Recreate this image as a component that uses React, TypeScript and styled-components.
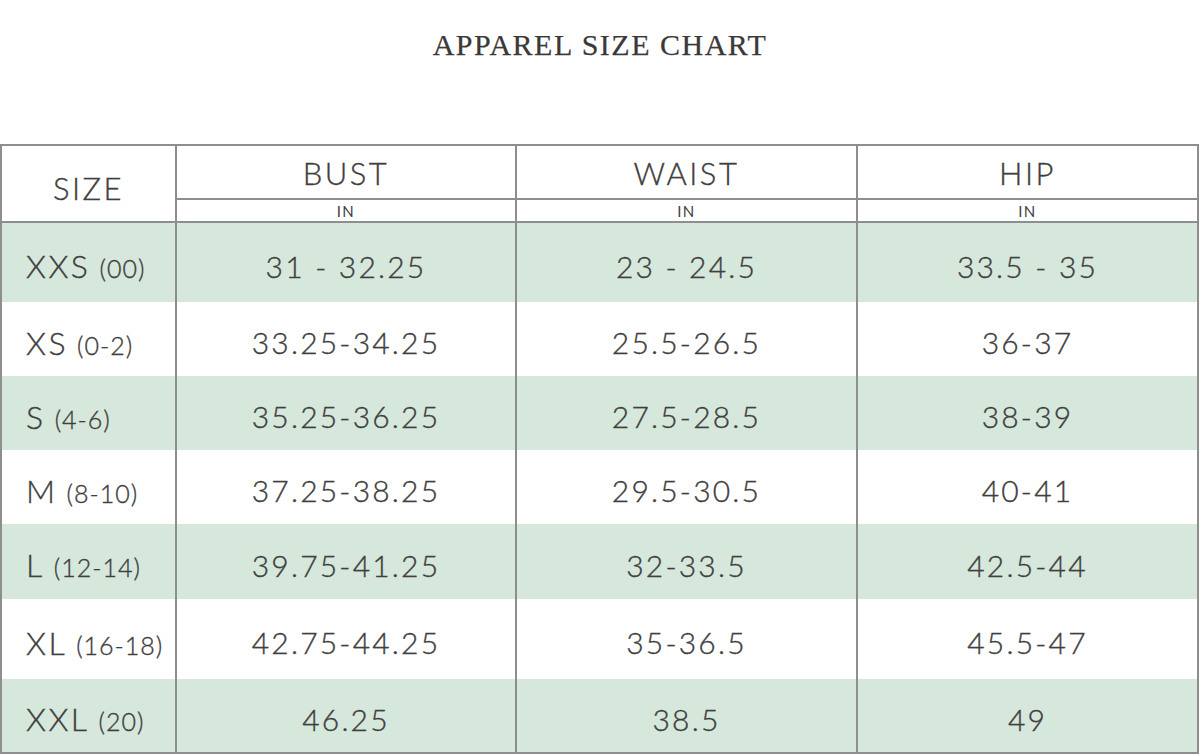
import React from "react";
import styled, { createGlobalStyle } from "styled-components";

const Global = createGlobalStyle`
  html, body { margin: 0; padding: 0; background: #ffffff; }
  body { font-family: "Lato", "Liberation Sans", sans-serif; color: #403e3e; }
`;

const Page = styled.div`
  width: 1200px;
  height: 756px;
  overflow: hidden;
  background: #ffffff;
`;

const TitleBar = styled.header`
  height: 144px;
  display: flex;
  justify-content: center;
  align-items: flex-start;
  box-sizing: border-box;
`;

const Title = styled.h1`
  margin: 27px 0 0;
  font-family: "Liberation Serif", "DejaVu Serif", serif;
  font-weight: 400;
  font-size: 30px;
  line-height: 36px;
  letter-spacing: 1.5px;
  color: #3b3838;
  -webkit-text-stroke: 0.25px #3b3838;
`;

const Table = styled.table`
  width: 1197px;
  table-layout: fixed;
  border-collapse: collapse;
  border: 2px solid #8e8e8e;
`;

const Col = styled.col<{ $w: number }>`
  width: ${(p) => p.$w}px;
`;

const HeadRow = styled.tr<{ $h: number }>`
  height: ${(p) => p.$h}px;
`;

const HeadCell = styled.th<{ $size?: boolean }>`
  border: 2px solid #8e8e8e;
  padding: ${(p) => (p.$size ? "8px 0 0" : "2px 0 0")};
  font-weight: 300;
  font-size: 31px;
  line-height: 36px;
  letter-spacing: 2.5px;
  text-align: center;
  vertical-align: middle;
  color: #403e3e;
  -webkit-text-stroke: 0.35px #403e3e;
`;

const UnitCell = styled.th`
  border: 2px solid #8e8e8e;
  padding: 1px 0 0;
  font-weight: 400;
  font-size: 15px;
  line-height: 18px;
  letter-spacing: 1.5px;
  text-align: center;
  vertical-align: middle;
  color: #403e3e;
`;

const Row = styled.tr<{ $shaded: boolean; $h: number }>`
  background: ${(p) => (p.$shaded ? "#d6e8dc" : "#ffffff")};
  height: ${(p) => p.$h}px;
`;

const SizeCell = styled.td`
  border-right: 2px solid #8e8e8e;
  padding: 6px 0 0 24px;
  vertical-align: middle;
  white-space: nowrap;
  font-weight: 300;
  -webkit-text-stroke: 0.35px #403e3e;
`;

const SizeLabel = styled.span`
  font-size: 32px;
  letter-spacing: 2.5px;
`;

const SizeNum = styled.span`
  font-size: 25px;
  letter-spacing: 1px;
  margin-left: 9px;
`;

const ValueCell = styled.td`
  border-right: 2px solid #8e8e8e;
  padding: 6px 0 0;
  text-align: center;
  vertical-align: middle;
  font-weight: 300;
  font-size: 30px;
  letter-spacing: 2.2px;
  white-space: pre;
  -webkit-text-stroke: 0.35px #403e3e;
`;

type SizeRow = {
  size: string;
  num: string;
  bust: string;
  waist: string;
  hip: string;
  h: number;
};

const rows: SizeRow[] = [
  { size: "XXS", num: "(00)", bust: "31 - 32.25", waist: "23 - 24.5", hip: "33.5 - 35", h: 80 },
  { size: "XS", num: "(0-2)", bust: "33.25-34.25", waist: "25.5-26.5", hip: "36-37", h: 74 },
  { size: "S", num: "(4-6)", bust: "35.25-36.25", waist: "27.5-28.5", hip: "38-39", h: 74 },
  { size: "M", num: "(8-10)", bust: "37.25-38.25", waist: "29.5-30.5", hip: "40-41", h: 74 },
  { size: "L", num: "(12-14)", bust: "39.75-41.25", waist: "32-33.5", hip: "42.5-44", h: 75 },
  { size: "XL", num: "(16-18)", bust: "42.75-44.25", waist: "35-36.5", hip: "45.5-47", h: 80 },
  { size: "XXL", num: "(20)", bust: "46.25", waist: "38.5", hip: "49", h: 74 },
];

export default function App() {
  return (
    <Page>
      <Global />
      <TitleBar>
        <Title>APPAREL SIZE CHART</Title>
      </TitleBar>
      <Table>
        <colgroup>
          <Col $w={175} />
          <Col $w={340} />
          <Col $w={341} />
          <Col $w={341} />
        </colgroup>
        <thead>
          <HeadRow $h={54}>
            <HeadCell $size rowSpan={2}>SIZE</HeadCell>
            <HeadCell>BUST</HeadCell>
            <HeadCell>WAIST</HeadCell>
            <HeadCell>HIP</HeadCell>
          </HeadRow>
          <HeadRow $h={23}>
            <UnitCell>IN</UnitCell>
            <UnitCell>IN</UnitCell>
            <UnitCell>IN</UnitCell>
          </HeadRow>
        </thead>
        <tbody>
          {rows.map((r, i) => (
            <Row key={r.size} $shaded={i % 2 === 0} $h={r.h}>
              <SizeCell>
                <SizeLabel>{r.size}</SizeLabel>
                <SizeNum>{r.num}</SizeNum>
              </SizeCell>
              <ValueCell>{r.bust}</ValueCell>
              <ValueCell>{r.waist}</ValueCell>
              <ValueCell>{r.hip}</ValueCell>
            </Row>
          ))}
        </tbody>
      </Table>
    </Page>
  );
}
